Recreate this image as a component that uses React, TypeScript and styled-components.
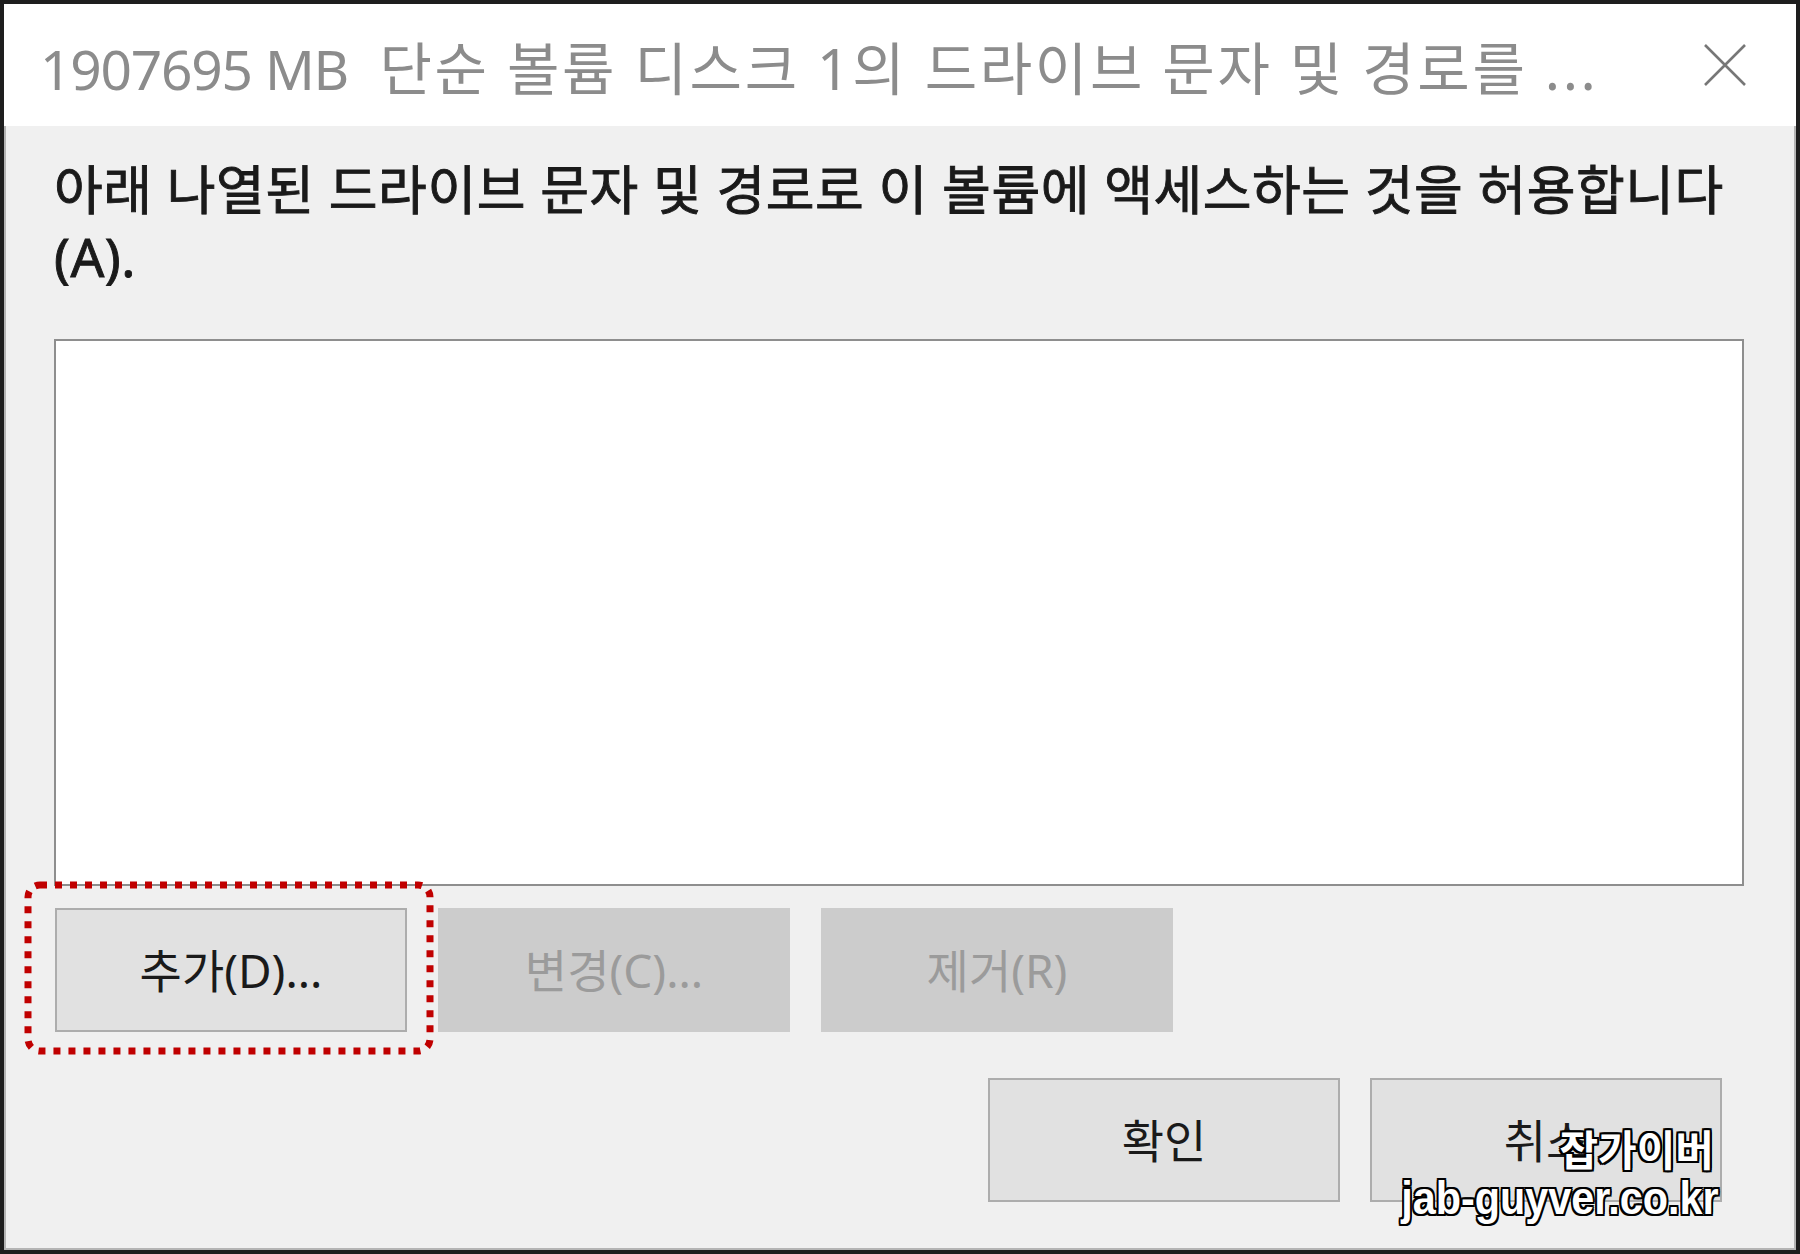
import React from "react";
import styled, {createGlobalStyle} from "styled-components";

const GlobalStyle = createGlobalStyle`
  html, body {
    margin: 0;
    padding: 0;
    background: #f0f0f0;
  }
  body {
    width: 1800px;
    height: 1254px;
    overflow: hidden;
    font-family: "Noto Sans", "Noto Sans CJK KR", sans-serif;
  }
`;

const Window = styled.div`
  position: relative;
  width: 1800px;
  height: 1254px;
  box-sizing: border-box;
  border: 4px solid #1e1e1e;
  background: #f0f0f0;
  display: flex;
  flex-direction: column;
  box-shadow: inset 0 0 0 2px #b4b4b4;
`;

const TitleBar = styled.div`
  height: 122px;
  flex: none;
  background: #ffffff;
  display: flex;
  align-items: center;
  justify-content: space-between;
  padding: 0 50px 0 36px;
`;

const Title = styled.div`
  font-family: "Noto Sans", "Noto Sans CJK KR", sans-serif;
  font-size: 55px;
  color: #8c8c8c;
  white-space: pre;
`;

const TitleSize = styled.span`
  letter-spacing: -1.2px;
`;

const TitleName = styled.span`
  font-size: 57px;
  letter-spacing: 2.6px;
  margin-left: 14px;
`;

const CloseButton = styled.div`
  width: 42px;
  height: 42px;
  display: flex;
`;

const Body = styled.div`
  flex: 1;
  display: flex;
  flex-direction: column;
  padding: 30px 52px 0 50px;
`;

const Label = styled.div`
  font-family: "Noto Sans", "Noto Sans CJK KR", sans-serif;
  font-size: 53px;
  line-height: 67px;
  letter-spacing: 0.5px;
  color: #1a1a1a;
  -webkit-text-stroke: 0.9px #1a1a1a;
`;

const ListBox = styled.div`
  margin-top: 49px;
  height: 547px;
  box-sizing: border-box;
  background: #ffffff;
  border: 2px solid #8e8e8e;
`;

const ActionRow = styled.div`
  margin-top: 22px;
  display: flex;
  gap: 31px;
  padding-left: 1px;
`;

const DialogRow = styled.div`
  margin-top: 46px;
  display: flex;
  justify-content: flex-end;
  gap: 30px;
  padding-right: 22px;
`;

const Button = styled.div<{ $disabled?: boolean }>`
  width: 352px;
  height: 124px;
  box-sizing: border-box;
  display: flex;
  align-items: center;
  justify-content: center;
  font-family: "Noto Sans", "Noto Sans CJK KR", sans-serif;
  font-size: 46px;
  background: ${p => (p.$disabled ? "#cccccc" : "#e1e1e1")};
  border: 2px solid ${p => (p.$disabled ? "#cccccc" : "#adadad")};
  color: ${p => (p.$disabled ? "#9b9b9b" : "#1a1a1a")};
  padding-bottom: 4px;
`;

const Highlighted = styled.div`
  position: relative;
  display: flex;
`;

const DottedMark = styled.svg`
  position: absolute;
  left: -31px;
  top: -27px;
  width: 410px;
  height: 174px;
  pointer-events: none;
`;

const Watermark = styled.div`
  position: absolute;
  right: 78px;
  bottom: 26px;
  display: flex;
  flex-direction: column;
  align-items: flex-end;
  color: #ffffff;
  text-shadow:
    -2px -2px 0 #000, 2px -2px 0 #000, -2px 2px 0 #000, 2px 2px 0 #000,
    0 -2px 0 #000, 0 2px 0 #000, -2px 0 0 #000, 2px 0 0 #000;
`;

const MarkName = styled.div`
  font-family: "Noto Sans CJK KR", sans-serif;
  font-weight: 700;
  font-size: 42px;
  line-height: 48px;
  margin-right: 4px;
`;

const MarkUrl = styled.div`
  font-family: "Liberation Sans", sans-serif;
  font-weight: 700;
  font-size: 47px;
  line-height: 52px;
  transform: scaleX(0.88);
  transform-origin: right center;
`;

export default function App() {
    return <>
        <GlobalStyle/>
        <Window>
            <TitleBar>
                <Title>
                    <TitleSize>{"1907695 MB"}</TitleSize>
                    <TitleName>{" 단순 볼륨 디스크 1의 드라이브 문자 및 경로를 ..."}</TitleName>
                </Title>
                <CloseButton>
                    <svg width="42" height="42" viewBox="0 0 42 42">
                        <path d="M1 1 L41 41 M41 1 L1 41" stroke="#777" strokeWidth="2.6" fill="none"/>
                    </svg>
                </CloseButton>
            </TitleBar>
            <Body>
                <Label>
                    아래 나열된 드라이브 문자 및 경로로 이 볼륨에 액세스하는 것을 허용합니다
                    <br/>(A).
                </Label>
                <ListBox/>
                <ActionRow>
                    <Highlighted>
                        <Button>추가(D)...</Button>
                        <DottedMark viewBox="0 0 410 174">
                            <rect x="4" y="4" width="402" height="166" rx="12" fill="none"
                                  stroke="#c00000" strokeWidth="7" strokeDasharray="7 8"/>
                        </DottedMark>
                    </Highlighted>
                    <Button $disabled>변경(C)...</Button>
                    <Button $disabled>제거(R)</Button>
                </ActionRow>
                <DialogRow>
                    <Button>확인</Button>
                    <Button>취소</Button>
                </DialogRow>
            </Body>
            <Watermark>
                <MarkName>잡가이버</MarkName>
                <MarkUrl>jab-guyver.co.kr</MarkUrl>
            </Watermark>
        </Window>
    </>;
}
